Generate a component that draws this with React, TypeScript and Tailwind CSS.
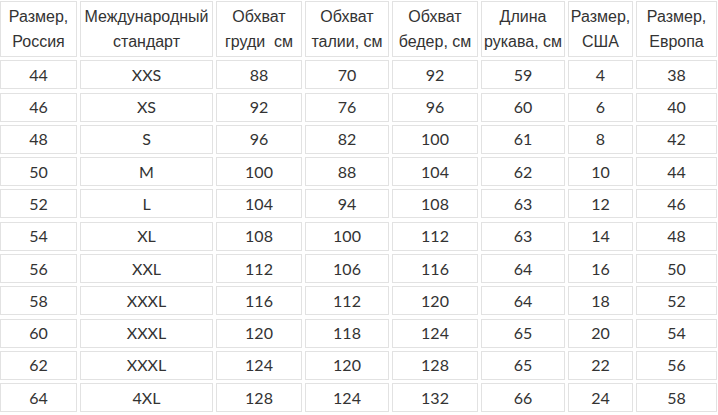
const headers = [
  ["Размер,", "Россия"],
  ["Международный", "стандарт"],
  ["Обхват", "груди  см"],
  ["Обхват", "талии, см"],
  ["Обхват", "бедер, см"],
  ["Длина", "рукава, см"],
  ["Размер,", "США"],
  ["Размер,", "Европа"],
];

const rows = [
  ["44", "XXS", "88", "70", "92", "59", "4", "38"],
  ["46", "XS", "92", "76", "96", "60", "6", "40"],
  ["48", "S", "96", "82", "100", "61", "8", "42"],
  ["50", "M", "100", "88", "104", "62", "10", "44"],
  ["52", "L", "104", "94", "108", "63", "12", "46"],
  ["54", "XL", "108", "100", "112", "63", "14", "48"],
  ["56", "XXL", "112", "106", "116", "64", "16", "50"],
  ["58", "XXXL", "116", "112", "120", "64", "18", "52"],
  ["60", "XXXL", "120", "118", "124", "65", "20", "54"],
  ["62", "XXXL", "124", "120", "128", "65", "22", "56"],
  ["64", "4XL", "128", "124", "132", "66", "24", "58"],
];

export default function App() {
  return (
    <div className="w-[718px] h-[415px] overflow-hidden bg-white pt-px text-[#333]">
      <div className="grid grid-cols-[77px_133px_86px_84px_86px_84px_65px_81px] grid-rows-[56px] auto-rows-[29px] gap-x-[3px] gap-y-[3.3px]">
        {headers.map((h, i) => (
          <div
            key={i}
            className="border border-[#e2e2e2] flex flex-col items-center justify-center text-[16px] leading-[25px] font-['Liberation_Sans',Arial,sans-serif] whitespace-pre"
          >
            <span>{h[0]}</span>
            <span>{h[1]}</span>
          </div>
        ))}
        {rows.map((r, ri) =>
          r.map((c, ci) => (
            <div
              key={ri + "-" + ci}
              className="border border-[#e2e2e2] flex items-center justify-center text-[16px] font-['Lato',sans-serif]"
            >
              {c}
            </div>
          ))
        )}
      </div>
    </div>
  );
}
